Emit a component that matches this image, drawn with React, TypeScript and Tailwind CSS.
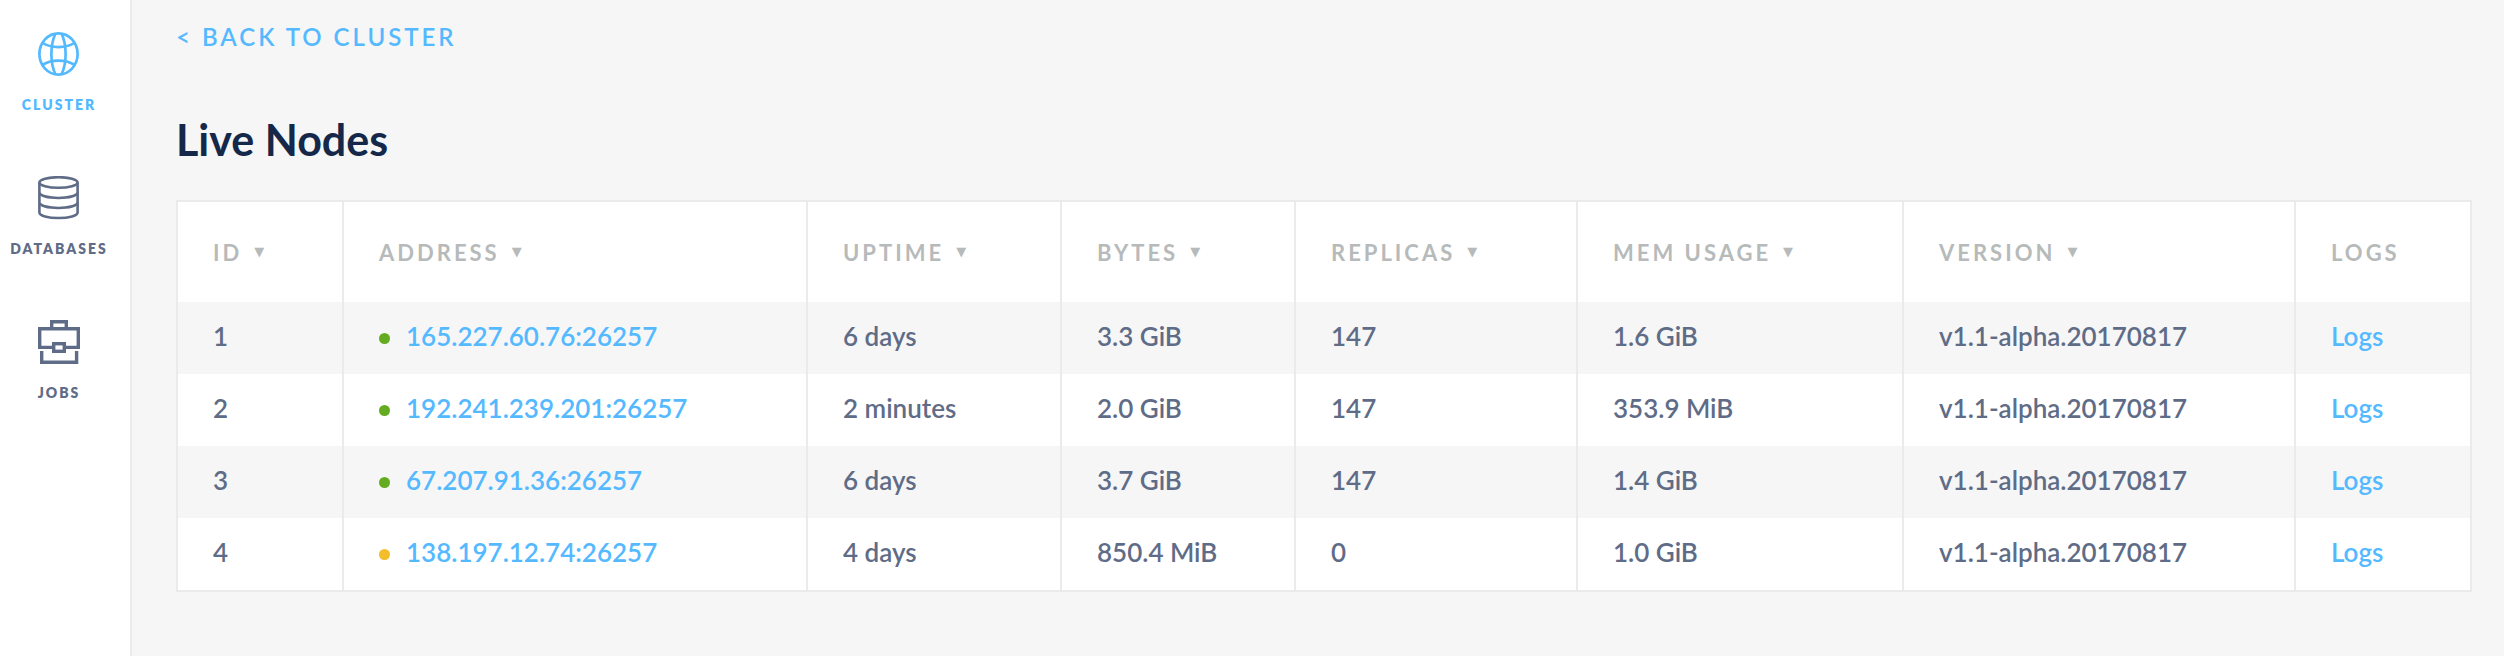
import type { ReactNode } from "react";

type NodeRow = {
  id: number;
  address: string;
  healthy: boolean;
  uptime: string;
  bytes: string;
  replicas: number;
  memory: string;
  version: string;
};

const nodes: NodeRow[] = [
  { id: 1, address: "165.227.60.76:26257", healthy: true, uptime: "6 days", bytes: "3.3 GiB", replicas: 147, memory: "1.6 GiB", version: "v1.1-alpha.20170817" },
  { id: 2, address: "192.241.239.201:26257", healthy: true, uptime: "2 minutes", bytes: "2.0 GiB", replicas: 147, memory: "353.9 MiB", version: "v1.1-alpha.20170817" },
  { id: 3, address: "67.207.91.36:26257", healthy: true, uptime: "6 days", bytes: "3.7 GiB", replicas: 147, memory: "1.4 GiB", version: "v1.1-alpha.20170817" },
  { id: 4, address: "138.197.12.74:26257", healthy: false, uptime: "4 days", bytes: "850.4 MiB", replicas: 0, memory: "1.0 GiB", version: "v1.1-alpha.20170817" },
];

const columns = [
  { title: "ID", width: "w-[166px]", sortable: true },
  { title: "Address", width: "w-[464px]", sortable: true },
  { title: "Uptime", width: "w-[254px]", sortable: true },
  { title: "Bytes", width: "w-[234px]", sortable: true },
  { title: "Replicas", width: "w-[282px]", sortable: true },
  { title: "Mem Usage", width: "w-[326px]", sortable: true },
  { title: "Version", width: "w-[392px]", sortable: true },
  { title: "Logs", width: "w-[176px]", sortable: false },
];

function ClusterIcon() {
  return (
    <svg width="42" height="44" viewBox="0 0 42 44" fill="none" stroke="currentColor" strokeWidth="2.7" aria-hidden="true">
      <ellipse cx="20.5" cy="22" rx="19.1" ry="20.6" />
      <path d="M17.5 1.5C12 13 12 31 17.5 42.5M23.5 1.5C29 13 29 31 23.5 42.5" />
      <path d="M4 10.5C13 16.6 28 16.6 37 10.5M4 33.2C13 27.2 28 27.2 37 33.2" />
    </svg>
  );
}

function DatabasesIcon() {
  return (
    <svg width="42" height="44" viewBox="0 0 42 44" fill="none" stroke="currentColor" strokeWidth="2.6" aria-hidden="true">
      <ellipse cx="20.5" cy="6.5" rx="19.1" ry="5.3" />
      <path d="M1.4 6.5V36.5C1.4 39.6 9.8 42 20.5 42S39.6 39.6 39.6 36.5V6.5" />
      <path d="M1.4 17C3 20 11 22 20.5 22S38 20 39.6 17" />
      <path d="M1.4 27C3 30 11 32 20.5 32S38 30 39.6 27" />
    </svg>
  );
}

function JobsIcon() {
  return (
    <svg width="42" height="44" viewBox="0 0 42 44" fill="none" stroke="currentColor" strokeWidth="3.4" aria-hidden="true">
      <path d="M13.7 8V1.7H28.3V8" />
      <path d="M14 27.4H1.7V8.7H40.3V27.4H28" />
      <rect x="15.7" y="23.7" width="10.6" height="7.6" />
      <path d="M3.7 31V42.3H38.6V31" />
    </svg>
  );
}

function NavItem({ label, active, children }: { label: string; active?: boolean; children: ReactNode }) {
  return (
    <li>
      <a
        href="#"
        className={`flex h-36 flex-col items-center pt-8 ${active ? "text-[#54b9ff]" : "text-[#5f6c87]"}`}
      >
        {children}
        <span className="mt-[19px] text-[14px] leading-5 font-extrabold tracking-[2px] uppercase">{label}</span>
      </a>
    </li>
  );
}

export default function App() {
  return (
    <div className="flex min-h-screen bg-[#f6f6f6] font-['Lato',sans-serif] text-[#5f6c87]">
      <nav className="w-[132px] shrink-0 border-r-2 border-[#ebebeb] bg-white pr-3" aria-label="Main">
        <ul>
          <NavItem label="Cluster" active>
            <ClusterIcon />
          </NavItem>
          <NavItem label="Databases">
            <DatabasesIcon />
          </NavItem>
          <NavItem label="Jobs">
            <JobsIcon />
          </NavItem>
        </ul>
      </nav>
      <main className="min-w-0 flex-1 px-8 pt-[21px] pl-11">
        <a href="#" className="block w-fit text-2xl leading-8 font-semibold tracking-[3px] text-[#54b9ff] uppercase">
          &lt; Back to Cluster
        </a>
        <h1 className="mt-[57px] text-[43px] leading-[60px] font-bold text-[#152849]">Live Nodes</h1>
        <table className="mt-[30px] w-full table-fixed border-separate border-spacing-0 border-y-2 border-r-2 border-[#ebebeb] bg-white text-left">
          <thead>
            <tr className="h-[100px]">
              {columns.map((column) => (
                <th
                  key={column.title}
                  scope="col"
                  className={`${column.width} border-l-2 border-[#ebebeb] pl-[35px] text-[22px] font-bold tracking-[3px] whitespace-nowrap text-[#b7baba] uppercase`}
                >
                  {column.sortable ? (
                    <button type="button" className="flex items-center gap-3 uppercase">
                      {column.title}
                      <span className="font-['DejaVu_Sans'] text-[13px] tracking-normal">▼</span>
                    </button>
                  ) : (
                    column.title
                  )}
                </th>
              ))}
            </tr>
          </thead>
          <tbody className="text-[26px] leading-8 font-semibold whitespace-nowrap [&_td]:border-l-2 [&_td]:border-[#ebebeb] [&_td]:pb-1 [&_td]:pl-[35px]">
            {nodes.map((node) => (
              <tr key={node.id} className="h-[72px] odd:bg-[#f6f6f6]">
                <td>{node.id}</td>
                <td>
                  <div className="flex items-center gap-4">
                    <span
                      className={`mt-1 size-[11px] rounded-full ${node.healthy ? "bg-[#63ac22]" : "bg-[#f3bd2b]"}`}
                      role="img"
                      aria-label={node.healthy ? "Healthy" : "Suspect"}
                    />
                    <a href="#" className="text-[#54b9ff]">
                      {node.address}
                    </a>
                  </div>
                </td>
                <td>{node.uptime}</td>
                <td>{node.bytes}</td>
                <td>{node.replicas}</td>
                <td>{node.memory}</td>
                <td>{node.version}</td>
                <td>
                  <a href="#" className="text-[#54b9ff]">
                    Logs
                  </a>
                </td>
              </tr>
            ))}
          </tbody>
        </table>
      </main>
    </div>
  );
}
